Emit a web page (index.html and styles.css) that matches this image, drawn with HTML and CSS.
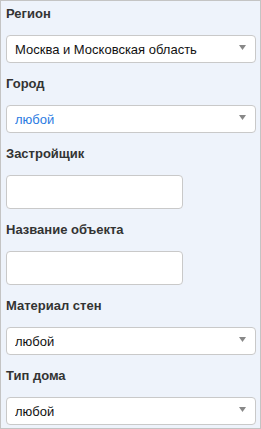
FILE: index.html
```html
<!DOCTYPE html>
<html lang="ru">
<head>
  <meta charset="UTF-8" />
  <meta name="viewport" content="width=device-width, initial-scale=1.0"/>
  <title>Фильтр</title>
  <link rel="stylesheet" href="styles.css">
</head>
<body>
  <form class="filtro">
    <div class="campo">
      <label>Регион</label>
      <div class="lista">
        <select>
          <option>Москва и Московская область</option>
        </select>
        <svg class="seta" width="7" height="5" viewBox="0 0 7 5"><path d="M0 0h7L3.5 5z"/></svg>
      </div>
    </div>

    <div class="campo">
      <label>Город</label>
      <div class="lista">
        <select class="azul">
          <option>любой</option>
        </select>
        <svg class="seta" width="7" height="5" viewBox="0 0 7 5"><path d="M0 0h7L3.5 5z"/></svg>
      </div>
    </div>

    <div class="campo">
      <label>Застройщик</label>
      <input type="text" class="texto">
    </div>

    <div class="campo">
      <label>Название объекта</label>
      <input type="text" class="texto">
    </div>

    <div class="campo">
      <label>Материал стен</label>
      <div class="lista">
        <select>
          <option>любой</option>
        </select>
        <svg class="seta" width="7" height="5" viewBox="0 0 7 5"><path d="M0 0h7L3.5 5z"/></svg>
      </div>
    </div>

    <div class="campo">
      <label>Тип дома</label>
      <div class="lista">
        <select>
          <option>любой</option>
        </select>
        <svg class="seta" width="7" height="5" viewBox="0 0 7 5"><path d="M0 0h7L3.5 5z"/></svg>
      </div>
    </div>
  </form>
</body>
</html>
```

FILE: styles.css
```css
body {
  margin: 0;
  font-family: 'Liberation Sans', Arial, sans-serif;
}

.filtro {
  width: 261px;
  height: 429px;
  box-sizing: border-box;
  background-color: #eef3fb;
  border: 1px solid #c4c4c4;
  padding: 5px 4px 3px 5px;
  display: flex;
  flex-direction: column;
  gap: 13px;
}

.campo label {
  display: block;
  font-size: 13px;
  line-height: 16px;
  font-weight: bold;
  color: #333;
  margin-bottom: 13px;
}

.lista {
  position: relative;
}

.lista select {
  display: block;
  width: 100%;
  height: 28px;
  box-sizing: border-box;
  appearance: none;
  -webkit-appearance: none;
  background: #fff;
  border: 1px solid #c9c9c9;
  border-radius: 4px;
  padding: 0 24px 0 8px;
  font-family: inherit;
  font-size: 13px;
  color: #111;
  outline: none;
}

.lista select.azul {
  color: #2a7be2;
}

.seta {
  position: absolute;
  right: 10px;
  top: 10px;
  fill: #888;
}

.texto {
  display: block;
  width: 177px;
  height: 34px;
  box-sizing: border-box;
  background: #fff;
  border: 1px solid #c9c9c9;
  border-radius: 4px;
  padding: 0 8px;
  font-size: 13px;
  outline: none;
}
```
